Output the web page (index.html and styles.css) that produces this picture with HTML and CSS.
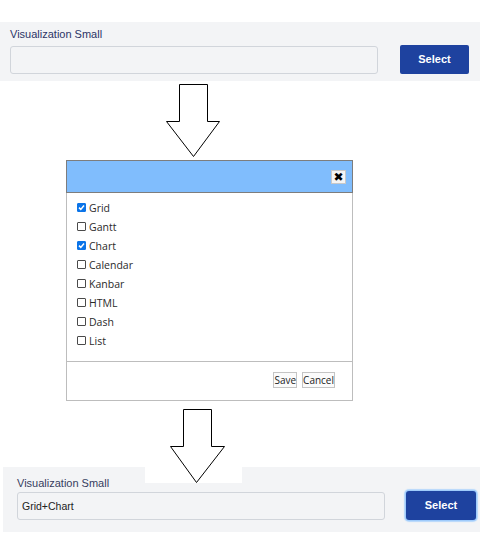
FILE: index.html
```html
<!DOCTYPE html>
<html>
<head>
<meta charset="utf-8">
<link rel="stylesheet" href="styles.css">
</head>
<body>
<div class="page">
  <section class="panel panel-top">
    <div class="field-label">Visualization Small</div>
    <div class="field-row">
      <input class="field-input" type="text" value="">
      <button class="select-btn">Select</button>
    </div>
  </section>

  <div class="arrow arrow-one">
    <svg width="60" height="79" viewBox="0 0 60 79">
      <polygon points="16.5,3.5 44.5,3.5 44.5,40.5 56.5,40.5 30.5,75.5 3.5,40.5 16.5,40.5" fill="#fff" stroke="#000" stroke-width="1"/>
    </svg>
  </div>

  <div class="dialog">
    <div class="dialog-head">
      <span class="close-btn">✖</span>
    </div>
    <ul class="options">
      <li><span class="box checked"><svg width="9" height="9" viewBox="0 0 9 9"><path d="M2 4.6 L3.8 6.4 L7 2.6" fill="none" stroke="#fff" stroke-width="1.5"/></svg></span>Grid</li>
      <li><span class="box"></span>Gantt</li>
      <li><span class="box checked"><svg width="9" height="9" viewBox="0 0 9 9"><path d="M2 4.6 L3.8 6.4 L7 2.6" fill="none" stroke="#fff" stroke-width="1.5"/></svg></span>Chart</li>
      <li><span class="box"></span>Calendar</li>
      <li><span class="box"></span>Kanbar</li>
      <li><span class="box"></span>HTML</li>
      <li><span class="box"></span>Dash</li>
      <li><span class="box"></span>List</li>
    </ul>
    <div class="dialog-foot">
      <button class="plain-btn">Save</button>
      <button class="plain-btn">Cancel</button>
    </div>
  </div>

  <div class="arrow arrow-two">
    <svg width="97" height="82" viewBox="0 0 97 82">
      <polygon points="38.5,8.5 66.5,8.5 66.5,45.5 79.5,45.5 51.5,81.5 25.5,45.5 38.5,45.5" fill="#fff" stroke="#000" stroke-width="1"/>
    </svg>
  </div>

  <section class="panel panel-bottom">
    <div class="field-label">Visualization Small</div>
    <div class="field-row">
      <input class="field-input" type="text" value="Grid+Chart">
      <button class="select-btn focused">Select</button>
    </div>
  </section>
</div>
</body>
</html>
```

FILE: styles.css
```css
html, body {
  margin: 0;
  padding: 0;
  background: #ffffff;
}

.page {
  width: 489px;
  height: 547px;
  padding-top: 22px;
  box-sizing: border-box;
  font-family: "Liberation Sans", Arial, sans-serif;
}

.panel {
  background: #f3f4f6;
  display: flex;
  flex-direction: column;
}

.panel-top {
  width: 480px;
  box-sizing: border-box;
  height: 59px;
  padding: 6px 11px 0 10px;
}

.panel-bottom {
  position: relative;
  z-index: 0;
  margin-left: 3px;
  width: 477px;
  box-sizing: border-box;
  height: 65px;
  margin-top: -16px;
  padding: 10px 4px 0 14px;
}

.field-label {
  font-size: 11px;
  line-height: 13px;
  color: #2c3566;
  margin-bottom: 4px;
}

.panel-bottom .field-label {
  color: #363d5e;
  margin-bottom: 1px;
}

.field-row {
  display: flex;
  align-items: center;
  justify-content: space-between;
  height: 29px;
}

.field-input {
  width: 368px;
  height: 28px;
  box-sizing: border-box;
  border: 1px solid #d1d5db;
  border-radius: 3px;
  background: #f3f4f6;
  padding: 0 4px;
  margin: 0;
  font-family: "Liberation Sans", Arial, sans-serif;
  font-size: 10.5px;
  color: #222;
  outline: none;
}

.select-btn {
  width: 69px;
  height: 29px;
  border: none;
  border-radius: 2px;
  background: #1e429f;
  color: #ffffff;
  font-family: "Liberation Sans", Arial, sans-serif;
  font-weight: bold;
  font-size: 11px;
  margin: 0;
  padding: 0 0 1px 0;
}

.select-btn.focused {
  width: 70px;
  border-radius: 3px;
  box-shadow: 0 0 0 1px #9fcbfb, 0 0 1px 2px #b6d8fc;
}

.arrow svg {
  display: block;
}

.arrow-one {
  height: 79px;
  margin-left: 163px;
  width: 60px;
}

.arrow-two {
  position: relative;
  z-index: 1;
  margin-left: 145px;
  width: 97px;
  height: 82px;
  background: #ffffff;
}

.dialog {
  margin-left: 66px;
  width: 287px;
  height: 241px;
  box-sizing: border-box;
  border: 1px solid #bdbdbd;
  border-top: none;
  background: #ffffff;
  display: flex;
  flex-direction: column;
  font-family: "Open Sans", "Segoe UI", sans-serif;
}

.dialog-head {
  height: 33px;
  box-sizing: border-box;
  margin: 0 -1px;
  background: #80bdfd;
  border: 1px solid #7d7d7d;
  display: flex;
  align-items: center;
  justify-content: flex-end;
  padding: 1px 6px 0 0;
}

.close-btn {
  width: 15px;
  height: 14px;
  box-sizing: border-box;
  background: #f4f4f4;
  border: 1px solid #c8c8c8;
  display: flex;
  align-items: center;
  justify-content: center;
  font-size: 12px;
  font-weight: bold;
  color: #000;
  font-family: "DejaVu Sans", sans-serif;
  line-height: 1;
}

.options {
  list-style: none;
  margin: 0;
  padding: 5px 0 0 10px;
  height: 169px;
  box-sizing: border-box;
  border-bottom: 1px solid #bdbdbd;
}

.options li {
  height: 19px;
  display: flex;
  align-items: center;
  font-size: 10.5px;
  color: #2a2a2a;
}

.box {
  width: 9px;
  height: 9px;
  box-sizing: border-box;
  border: 1px solid #4a4a4a;
  border-radius: 1px;
  background: #fff;
  margin-right: 3px;
  display: flex;
}

.box.checked {
  background: #0b74e8;
  border-color: #0b74e8;
}

.box svg {
  display: block;
  margin: -1px;
}

.dialog-foot {
  flex: 1;
  display: flex;
  justify-content: flex-end;
  align-items: flex-start;
  gap: 5px;
  padding: 10px 17px 0 0;
}

.plain-btn {
  height: 16px;
  box-sizing: border-box;
  border: 1px solid #c4c4c4;
  background: #fbfbfb;
  padding: 0;
  margin: 0;
  font-family: "Open Sans", "Segoe UI", sans-serif;
  font-size: 10px;
  line-height: 13px;
  color: #222;
}
```
